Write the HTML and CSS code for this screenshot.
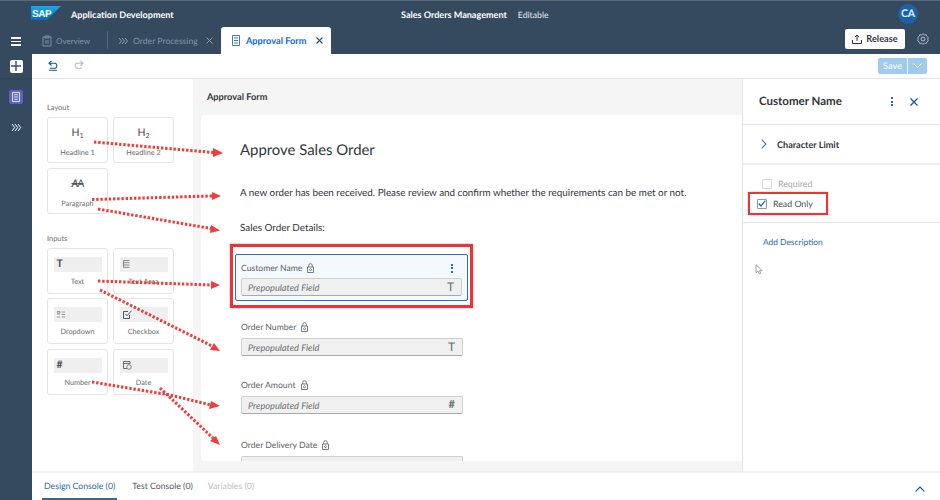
FILE: index.html
```html
<!DOCTYPE html>
<html lang="en">
<head>
<meta charset="utf-8">
<title>Approval Form</title>
<link rel="stylesheet" href="styles.css">
</head>
<body>
<div class="app">
  <header class="shell">
    <div class="shell-top">
      <div class="brand">
        <svg class="logo" width="30" height="14" viewBox="0 0 30 14"><defs><linearGradient id="sapg" x1="0" y1="0" x2="0" y2="1"><stop offset="0" stop-color="#19a9e8"/><stop offset="1" stop-color="#0a6ab8"/></linearGradient></defs><path d="M0 0H30L16 14H0Z" fill="url(#sapg)"/><text x="1" y="10.500" class="logo-text">SAP</text></svg>
        <span class="app-name">Application Development</span>
      </div>
      <div class="project"><b>Sales Orders Management</b><span>Editable</span></div>
      <div class="avatar">CA</div>
    </div>
    <div class="shell-tabs">
      <div class="tab first">
        <svg class="ico" width="10" height="12" viewBox="0 0 10 12"><path d="M1 2H9V11H1ZM3 1H7V3H3ZM3 6H7M3 8H7" fill="none" stroke="#7d8ea0"/></svg>
        <span>Overview</span>
      </div>
      <div class="tab-sep"></div>
      <div class="tab second">
        <svg class="ico" width="10" height="8" viewBox="0 0 10 8"><path d="M1 1L3.500 4L1 7M4 1L6.500 4L4 7M7 1L9.500 4L7 7" fill="none" stroke="#8e9dad"/></svg>
        <span>Order Processing</span>
        <svg class="close" width="7" height="7" viewBox="0 0 7 7"><path d="M.5 .5L6.500 6.500M6.500 .5L.5 6.500" stroke="#8e9dad"/></svg>
      </div>
      <div class="tab active">
        <svg class="ico" width="8" height="11" viewBox="0 0 8 11"><path d="M.5 .5H7.500V10.500H.5ZM2 3H6M2 5.500H6M2 8H6" fill="none" stroke="#427cac"/></svg>
        <span>Approval Form</span>
        <svg class="close" width="7" height="7" viewBox="0 0 7 7"><path d="M.5 .5L6.500 6.500M6.500 .5L.5 6.500" stroke="#32506e" stroke-width="1.100"/></svg>
      </div>
      <div class="shell-actions">
        <button class="release">
          <svg width="10" height="10" viewBox="0 0 10 10"><path d="M5 7V1M3 3L5 1L7 3M.5 6V9.500H9.500V6" fill="none" stroke="#32363a"/></svg>
          Release
        </button>
        <svg class="gear" width="12" height="12" viewBox="0 0 12 12"><circle cx="6" cy="6" r="2" fill="none" stroke="#b8c4cf"/><path d="M6 .7L7.400 1.900L9.200 1.700L9.900 3.400L11.300 4.500L10.700 6.200L11.300 7.800L9.900 8.800L9.200 10.500L7.400 10.200L6 11.300L4.600 10.200L2.800 10.500L2.100 8.800L.7 7.800L1.300 6.200L.7 4.500L2.100 3.400L2.800 1.700L4.600 1.900Z" fill="none" stroke="#b8c4cf" stroke-width=".9"/></svg>
      </div>
    </div>
  </header>

  <div class="body">
    <nav class="rail">
      <div class="rail-top">
        <div class="burger"><i></i><i></i><i></i></div>
        <div class="plus"><svg width="10" height="10" viewBox="0 0 10 10"><path d="M5 0V10M0 5H10" stroke="#32506e" stroke-width="1.400"/></svg></div>
      </div>
      <div class="rail-item form-item"><svg width="8" height="10" viewBox="0 0 8 10"><path d="M.5 .5H7.500V9.500H.5ZM2 2.700H6M2 5H6M2 7.300H6" fill="none" stroke="#e4e6fa"/></svg></div>
      <div class="rail-item"><svg width="11" height="9" viewBox="0 0 11 9"><path d="M1 1L3.700 4.500L1 8M4 1L6.700 4.500L4 8M7 1L9.700 4.500L7 8" fill="none" stroke="#fff"/></svg></div>
    </nav>

    <div class="main">
      <div class="toolbar">
        <div class="history">
          <svg width="11" height="11" viewBox="0 0 11 11"><path d="M3.500 .8L1 3.200L3.500 5.500M1 3.200H7.500A3 3 0 0 1 7.500 8.200H2M1 10.200H9" fill="none" stroke="#0a5a9e" stroke-width="1.100"/></svg>
          <svg width="11" height="11" viewBox="0 0 11 11"><path d="M7.500 .8L10 3.200L7.500 5.500M10 3.200H3.500A3 3 0 0 0 3.500 8.200H9" fill="none" stroke="#9cc0de" stroke-width="1.100"/></svg>
        </div>
        <div class="save-group">
          <span class="save">Save</span>
          <span class="save-more"><svg width="9" height="5" viewBox="0 0 9 5"><path d="M.5 .5L4.500 4.500L8.500 .5" fill="none" stroke="#fff"/></svg></span>
        </div>
      </div>

      <div class="work">
        <aside class="palette">
          <div class="group-label">Layout</div>
          <div class="cards">
            <div class="card"><div class="head-glyph">H<sub>1</sub></div><div class="card-label">Headline 1</div></div>
            <div class="card"><div class="head-glyph">H<sub>2</sub></div><div class="card-label">Headline 2</div></div>
            <div class="card"><div class="head-glyph para">A<span>A</span></div><div class="card-label">Paragraph</div></div>
          </div>
          <div class="group-label inputs">Inputs</div>
          <div class="cards">
            <div class="card"><div class="well"><b class="glyph">T</b></div><div class="card-label">Text</div></div>
            <div class="card"><div class="well"><svg width="7" height="8" viewBox="0 0 7 8"><path d="M.5 .5H6.500M.5 2.700H6.500M.5 5H6.500M.5 7.300H6.500M.5 .5V7.500" fill="none" stroke="#85888a"/></svg></div><div class="card-label">Text Area</div></div>
            <div class="card"><div class="well"><svg width="8" height="9" viewBox="0 0 8 9"><path d="M0 1.500H3V3H0ZM0 4H3M0 7H3M4.500 2H8M4.500 4.500H8M4.500 7H8" fill="none" stroke="#85888a" stroke-width=".8"/></svg></div><div class="card-label">Dropdown</div></div>
            <div class="card"><div class="well"><svg width="9" height="9" viewBox="0 0 9 9"><path d="M6.500 5V8.500H.5V1.500H5M2.300 3.800L4 5.700L8.500 .8" fill="none" stroke="#55585a"/></svg></div><div class="card-label">Checkbox</div></div>
            <div class="card"><div class="well"><b class="glyph">#</b></div><div class="card-label">Number</div></div>
            <div class="card"><div class="well"><svg width="9" height="10" viewBox="0 0 9 10"><path d="M4 8.500H.5V1.500H7V4M.5 3.500H7" fill="none" stroke="#6a6d70"/><circle cx="6" cy="7" r="2.300" fill="none" stroke="#6a6d70" stroke-width=".8"/></svg></div><div class="card-label">Date</div></div>
          </div>
        </aside>

        <section class="canvas">
          <h2 class="canvas-title">Approval Form</h2>
          <div class="sheet">
            <h1 class="form-title">Approve Sales Order</h1>
            <p class="form-text">A new order has been received. Please review and confirm whether the requirements can be met or not.</p>
            <p class="form-sub">Sales Order Details:</p>
            <div class="highlight">
              <div class="field selected">
                <div class="field-head">
                  <span class="field-label">Customer Name</span>
                  <svg class="lock" width="7" height="10" viewBox="0 0 7 10"><path d="M1.700 4V2.500A1.800 1.800 0 0 1 5.300 2.500V4M.5 4H6.500V9.500H.5Z" fill="none" stroke="#6a6d70" stroke-width=".9"/><circle cx="3.500" cy="6.700" r="1" fill="none" stroke="#6a6d70" stroke-width=".8"/></svg>
                  <span class="dots"><i></i><i></i><i></i></span>
                </div>
                <div class="input"><em>Prepopulated Field</em><span class="type t">T</span></div>
              </div>
            </div>
            <div class="field number">
              <div class="field-head">
                <span class="field-label">Order Number</span>
                <svg class="lock" width="7" height="10" viewBox="0 0 7 10"><path d="M1.700 4V2.500A1.800 1.800 0 0 1 5.300 2.500V4M.5 4H6.500V9.500H.5Z" fill="none" stroke="#6a6d70" stroke-width=".9"/><circle cx="3.500" cy="6.700" r="1" fill="none" stroke="#6a6d70" stroke-width=".8"/></svg>
              </div>
              <div class="input"><em>Prepopulated Field</em><span class="type t">T</span></div>
            </div>
            <div class="field">
              <div class="field-head">
                <span class="field-label">Order Amount</span>
                <svg class="lock" width="7" height="10" viewBox="0 0 7 10"><path d="M1.700 4V2.500A1.800 1.800 0 0 1 5.300 2.500V4M.5 4H6.500V9.500H.5Z" fill="none" stroke="#6a6d70" stroke-width=".9"/><circle cx="3.500" cy="6.700" r="1" fill="none" stroke="#6a6d70" stroke-width=".8"/></svg>
              </div>
              <div class="input"><em>Prepopulated Field</em><span class="type hash">#</span></div>
            </div>
            <div class="field last">
              <div class="field-head">
                <span class="field-label">Order Delivery Date</span>
                <svg class="lock" width="7" height="10" viewBox="0 0 7 10"><path d="M1.700 4V2.500A1.800 1.800 0 0 1 5.300 2.500V4M.5 4H6.500V9.500H.5Z" fill="none" stroke="#6a6d70" stroke-width=".9"/><circle cx="3.500" cy="6.700" r="1" fill="none" stroke="#6a6d70" stroke-width=".8"/></svg>
              </div>
              <div class="input"><em></em></div>
            </div>
          </div>
        </section>

        <aside class="panel">
          <div class="panel-head">
            <span class="panel-title">Customer Name</span>
            <span class="dots dark"><i></i><i></i><i></i></span>
            <svg class="panel-close" width="8" height="8" viewBox="0 0 8 8"><path d="M.5 .5L7.500 7.500M7.500 .5L.5 7.500" stroke="#0a5a9e" stroke-width="1.300"/></svg>
          </div>
          <div class="panel-limit">
            <svg width="6" height="10" viewBox="0 0 6 10"><path d="M.7 .7L5 5L.7 9.300" fill="none" stroke="#427cac" stroke-width="1.100"/></svg>
            <b>Character Limit</b>
          </div>
          <div class="panel-checks">
            <label class="check off"><span class="box"></span>Required</label>
            <label class="check on"><span class="box"><svg width="8" height="7" viewBox="0 0 8 7"><path d="M.7 3.500L3 6L7.300 .7" fill="none" stroke="#0a6ed1" stroke-width="1.200"/></svg></span>Read Only</label>
          </div>
          <a class="add-desc">Add Description</a>
        </aside>
      </div>

      <footer class="console">
        <span class="console-tab current">Design Console (0)</span>
        <span class="console-tab">Test Console (0)</span>
        <span class="console-tab muted">Variables (0)</span>
        <svg class="console-up" width="10" height="6" viewBox="0 0 10 6"><path d="M.7 5.300L5 1L9.300 5.300" fill="none" stroke="#0a5a9e" stroke-width="1.200"/></svg>
      </footer>
    </div>
  </div>

  <svg class="cursor" width="9" height="11" viewBox="0 0 9 11"><path d="M1 .8V8.800L3 7L4.500 10L5.800 9.400L4.500 6.600H7.200Z" fill="#fff" stroke="#8a8d90" stroke-width=".8"/></svg>

  <svg class="arrows" width="940" height="500" viewBox="0 0 940 500">
    <g fill="none" stroke="#ee3b3b" stroke-width="3" stroke-dasharray="2.400 1.800">
      <path d="M94 142L213 152.500"/>
      <path d="M92 199.500L212 196"/>
      <path d="M98 209L211 228.500"/>
      <path d="M98 281L211 285"/>
      <path d="M100 290L212 346"/>
      <path d="M92 382L170 395L211 405"/>
      <path d="M160 388L214 439"/>
    </g>
    <g fill="#f03c3c">
      <path d="M213 148L223 153L213 157Z"/>
      <path d="M212 192L221 196L212 200Z"/>
      <path d="M211 225L220 230.500L210 233Z"/>
      <path d="M211 281L220 285L211 289Z"/>
      <path d="M214 343L220 351L210 350Z"/>
      <path d="M211 401L220 406L209 409Z"/>
      <path d="M216 436L220 445L210 441Z"/>
    </g>
  </svg>
</div>
</body>
</html>
```
FILE: styles.css
```css
* { box-sizing: border-box; }
html, body { margin: 0; padding: 0; }
body { font-family: Lato, "Open Sans", "Liberation Sans", sans-serif; color: #32363a; background: #fff; text-rendering: geometricPrecision; }
.app { position: relative; width: 940px; height: 500px; overflow: hidden; display: flex; flex-direction: column; }

.shell { height: 54px; background: #354a5f; border-top: 1px solid #5b6a79; flex: none; }
.shell-top { height: 26px; position: relative; display: flex; align-items: center; padding-left: 31px; }
.brand { display: flex; align-items: center; gap: 10px; }
.logo { display: block; margin-top: -3px; }
.logo-text { font: bold 10px "Liberation Sans", sans-serif; fill: #fff; letter-spacing: -.4px; }
.app-name { font-size: 9.050px; font-weight: 700; color: #fff; }
.project { position: absolute; left: 401px; top: 7px; display: flex; gap: 11px; font-size: 8.700px; line-height: 13px; color: #e6eaee; }
.project b { font-size: 9.050px; font-weight: 700; color: #fff; }
.avatar { position: absolute; left: 898px; top: 3px; width: 20px; height: 20px; border-radius: 50%; background: #1b62ab; color: #e8f0f8; font-size: 10.500px; font-weight: 700; line-height: 20px; text-align: center; }

.shell-tabs { height: 27px; display: flex; align-items: stretch; padding-left: 42px; font-size: 8.650px; }
.tab { display: flex; align-items: center; color: #8595a5; }
.tab .ico { flex: none; }
.first { width: 65px; gap: 4px; font-size: 8px; }
.tab-sep { width: 1px; height: 18px; margin-top: 4px; background: #55677a; }
.second { width: 113px; padding-left: 10px; gap: 5px; }
.second .close { margin-left: 3px; }
.active { width: 110px; padding-left: 11px; gap: 6px; background: #fff; color: #0a6ed1; font-size: 9.200px; font-weight: 700; border-radius: 3px 3px 0 0; }
.active .close { margin-left: 4px; }
.shell-actions { margin-left: auto; display: flex; align-items: center; gap: 12px; padding: 0 11px 4px 0; }
.release { width: 60px; height: 20px; display: flex; align-items: center; justify-content: center; gap: 4px; padding: 0; border: 0; border-radius: 2px; background: #fff; color: #32363a; font: 700 9.200px Lato, sans-serif; }

.body { flex: 1; min-height: 0; display: flex; }
.rail { width: 32px; flex: none; background: #354a5f; display: flex; flex-direction: column; align-items: center; }
.rail-top { width: 100%; height: 24px; display: flex; justify-content: center; align-items: center; box-shadow: 0 1px 2px rgba(0,0,0,.12); }
.burger { position: absolute; left: 11px; top: 37px; width: 10px; display: flex; flex-direction: column; gap: 2px; }
.burger i { display: block; height: 1.500px; background: #fff; }
.plus { width: 13px; height: 13px; border-radius: 2px; background: #fff; display: flex; align-items: center; justify-content: center; }
.rail-item { width: 14px; height: 14px; display: flex; align-items: center; justify-content: center; border-radius: 2px; margin-top: 12px; }
.form-item { background: #5d62c9; margin-top: 12px; }
.rail-item + .rail-item { margin-top: 16px; }

.main { flex: 1; min-width: 0; display: flex; flex-direction: column; }
.toolbar { height: 25px; flex: none; background: #fff; border-bottom: 1px solid #e5e5e5; display: flex; align-items: center; justify-content: space-between; padding: 0 13px 1px 16px; }
.history { display: flex; gap: 14px; }
.history svg { display: block; }
.save-group { display: flex; gap: 1px; }
.save { width: 29px; height: 16px; background: #9fcbef; border-radius: 2px 0 0 2px; color: #e9f3fb; font-size: 9.200px; font-weight: 700; line-height: 16px; text-align: center; }
.save-more { width: 19px; height: 16px; background: #9fcbef; border-radius: 0 2px 2px 0; display: flex; align-items: center; justify-content: center; }

.work { flex: 1; min-height: 0; display: flex; }
.palette { width: 161px; flex: none; background: #fff; padding: 23px 0 0 15px; }
.group-label { font-size: 7.400px; line-height: 11px; color: #6a6d70; margin-bottom: 4px; }
.group-label.inputs { margin-top: 19px; margin-bottom: 4px; }
.cards { display: grid; grid-template-columns: 61px 61px; grid-auto-rows: 46px; gap: 4.500px 5px; }
.card { border: 1px solid #e5e5e5; border-radius: 3px; display: flex; flex-direction: column; align-items: center; background: #fff; }
.head-glyph { height: 26px; padding-top: 9px; font-size: 10.500px; line-height: 12px; color: #4a4d50; }
.head-glyph sub { font-size: 7px; line-height: 0; vertical-align: -2px; }
.head-glyph.para { font-style: italic; font-weight: 700; color: #55585a; text-decoration: line-through; letter-spacing: -1px; }
.head-glyph.para span { font-style: normal; font-weight: 400; }
.card-label { font-size: 7.300px; line-height: 12px; color: #6a6d70; margin-top: 3px; }
.well { width: 48px; height: 15px; margin-top: 8px; background: #efefef; border-radius: 1px; display: flex; align-items: center; padding-left: 3px; }
.well + .card-label { margin-top: 4px; }
.glyph { font-size: 10.500px; line-height: 15px; color: #4a4d50; }

.canvas { flex: 1; min-width: 0; background: #f5f5f5; padding-left: 8px; display: flex; flex-direction: column; }
.canvas-title { margin: 0 0 0 6px; height: 36px; padding-top: 11px; font-size: 9.200px; line-height: 13px; font-weight: 700; color: #32363a; }
.sheet { height: 346px; overflow: hidden; background: #fff; border-radius: 3px 0 0 3px; padding: 25px 0 0 29px; }
.form-title { margin: 0 0 0 10px; font-size: 14.900px; line-height: 20px; font-weight: 400; color: #32363a; }
.form-text { margin: 26px 0 0 10px; font-size: 9.870px; line-height: 14px; color: #32363a; white-space: nowrap; }
.form-sub { margin: 21px 0 0 10px; font-size: 9.870px; line-height: 14px; color: #32363a; }
.highlight { width: 243px; height: 64px; margin-top: 9px; border: 3px solid #ee3338; padding: 7px 2px; box-shadow: 0 0 2px rgba(0,0,0,.3); }
.field { margin-left: 11px; width: 222px; margin-top: 22px; }
.field.number { margin-top: 12px; }
.field.last { margin-top: 24px; }
.field.selected { margin: 0; width: 233px; height: 47px; border: 1px solid #1d74c4; border-radius: 2px; background: #f4f9fe; padding: 6px 5px 0; position: relative; }
.field-head { display: flex; align-items: center; gap: 5px; height: 14px; margin-bottom: 4px; }
.selected .field-head { margin-bottom: 3px; }
.field-label { font-size: 8.650px; line-height: 14px; color: #5f6265; }
.lock { display: block; }
.dots { display: flex; flex-direction: column; gap: 1.500px; margin-left: auto; margin-right: 9px; }
.dots i { display: block; width: 2px; height: 2px; background: #1d74c4; }
.dots.dark i { background: #2a6aa8; }
.input { height: 18px; display: flex; align-items: center; justify-content: space-between; padding: 0 7px 0 6px; background: #f0f0f0; border: 1px solid #cfcfcf; border-bottom-color: #a9a9a9; border-radius: 2px; }
.input em { font-size: 9.200px; color: #6a6d70; }
.type { color: #6a6d70; line-height: 16px; }
.type.t { font-size: 12px; }
.type.hash { font-size: 11px; font-weight: 700; }

.panel { width: 198px; flex: none; background: #fff; border-left: 1px solid #e5e5e5; }
.panel-head { height: 46px; display: flex; align-items: center; padding: 0 22px 0 16px; border-bottom: 1px solid #e5e5e5; }
.panel-title { font-size: 11.500px; font-weight: 700; color: #32363a; flex: 1; }
.panel-close { margin-left: 17px; }
.panel-head .dots { margin: 0; }
.panel-limit { height: 40px; display: flex; align-items: center; gap: 10px; padding-left: 18px; border-bottom: 2px solid #eee; font-size: 9.100px; color: #32363a; }
.panel-limit b { font-weight: 700; }
.panel-checks { height: 58px; padding: 10px 0 0 5px; border-bottom: 1px solid #e5e5e5; }
.check { display: flex; align-items: center; gap: 6px; font-size: 8.800px; padding-left: 14px; width: 80px; }
.check.off { height: 17px; color: #a8a9aa; }
.check.on { height: 23px; color: #4a4d50; border: 2px solid #ee3338; padding-left: 7px; box-shadow: 0 0 2px rgba(0,0,0,.3); }
.box { width: 10px; height: 10px; border: 1px solid #d6d6d6; border-radius: 1px; background: #fff; display: flex; align-items: center; justify-content: center; flex: none; }
.check.on .box { border-color: #8a99a8; }
.add-desc { display: block; margin: 13px 0 0 20px; font-size: 8.400px; line-height: 12px; color: #2a6aa8; }

.console { height: 29px; flex: none; display: flex; align-items: center; padding-left: 10px; gap: 15px; border-top: 2px solid #eee; background: #fff; position: relative; font-size: 8.700px; color: #55585a; }
.console-tab { height: 100%; line-height: 26px; }
.console-tab.current { color: #2a6aa8; padding: 0 2px; border-bottom: 2px solid #2a6aa8; }
.console-tab.muted { color: #bcbdbe; }
.console-up { position: absolute; right: 15px; top: 13px; }

.cursor { position: absolute; left: 755px; top: 264px; }
.arrows { position: absolute; left: 0; top: 0; pointer-events: none; }
```
